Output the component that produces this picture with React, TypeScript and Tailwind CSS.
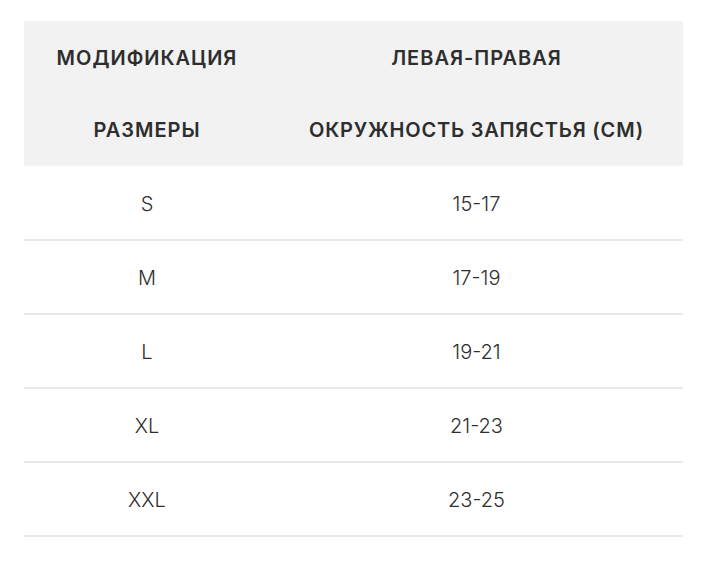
const rows = [
  ['S', '15-17'],
  ['M', '17-19'],
  ['L', '19-21'],
  ['XL', '21-23'],
  ['XXL', '23-25'],
]

export default function App() {
  return (
    <div className="min-h-[565px] bg-white px-6 pt-[21px] font-['Inter',sans-serif] text-[#2e2e2e]">
      <table className="w-[659px] border-collapse text-center">
        <thead className="bg-[#f2f2f2]">
          <tr className="h-[73px]">
            <th className="w-[246px] text-[20px] font-semibold uppercase tracking-[1px]">Модификация</th>
            <th className="text-[20px] font-semibold uppercase tracking-[1px]">Левая-правая</th>
          </tr>
          <tr className="h-[72px]">
            <th className="text-[20px] font-semibold uppercase tracking-[1px]">Размеры</th>
            <th className="text-[20px] font-semibold uppercase tracking-[0.8px]">Окружность запястья (см)</th>
          </tr>
        </thead>
        <tbody>
          {rows.map(([size, girth]) => (
            <tr key={size} className="h-[74px] border-b-2 border-[#e9e9e9]">
              <td className="pt-[2px] text-[20px] font-light">{size}</td>
              <td className="pt-[2px] text-[20px] font-light">{girth}</td>
            </tr>
          ))}
        </tbody>
      </table>
    </div>
  )
}
